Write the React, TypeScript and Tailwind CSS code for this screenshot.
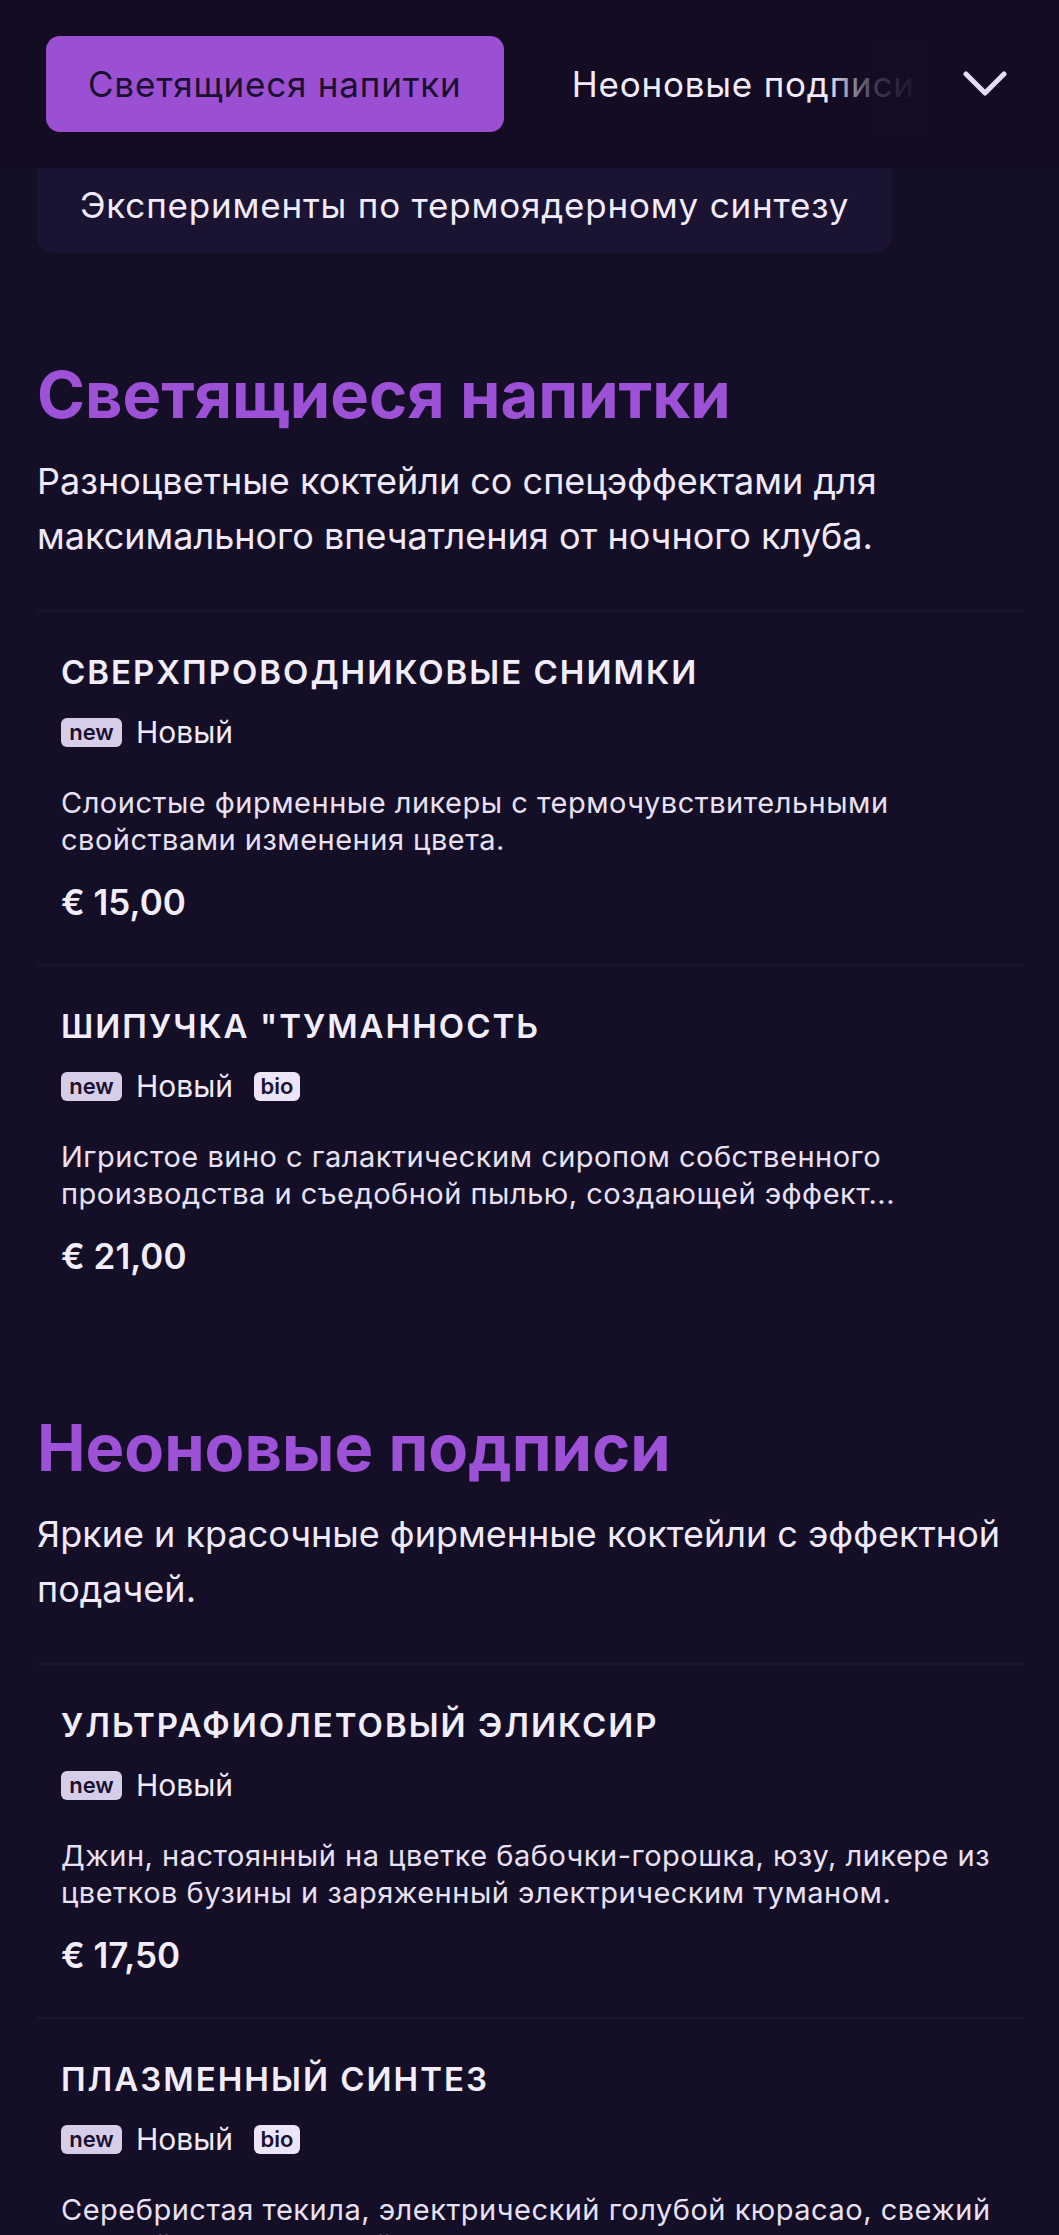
import React from 'react';

type Item = {
  title: string;
  desc: string;
  price: string;
  bio?: boolean;
};

type Section = {
  title: string;
  desc: string;
  items: Item[];
};

const sections: Section[] = [
  {
    title: 'Светящиеся напитки',
    desc: 'Разноцветные коктейли со спецэффектами для максимального впечатления от ночного клуба.',
    items: [
      {
        title: 'Сверхпроводниковые снимки',
        desc: 'Слоистые фирменные ликеры с термочувствительными свойствами изменения цвета.',
        price: '€ 15,00',
      },
      {
        title: 'Шипучка "Туманность',
        desc: 'Игристое вино с галактическим сиропом собственного производства и съедобной пылью, создающей эффект...',
        price: '€ 21,00',
        bio: true,
      },
    ],
  },
  {
    title: 'Неоновые подписи',
    desc: 'Яркие и красочные фирменные коктейли с эффектной подачей.',
    items: [
      {
        title: 'Ультрафиолетовый эликсир',
        desc: 'Джин, настоянный на цветке бабочки-горошка, юзу, ликере из цветков бузины и заряженный электрическим туманом.',
        price: '€ 17,50',
      },
      {
        title: 'Плазменный синтез',
        desc: 'Серебристая текила, электрический голубой кюрасао, свежий сок лайма и искрящийся тоник с ионным свечением.',
        price: '€ 19,00',
        bio: true,
      },
    ],
  },
];

function MenuItem({ item }: { item: Item }) {
  return (
    <div className="border-t-2 border-[#1d1633] px-[24px] pt-[40px] pb-[42px]">
      <h3 className="text-[33px] leading-[40px] font-semibold uppercase tracking-[2px] text-[#f2edfb]">
        {item.title}
      </h3>
      <div className="mt-[25px] flex h-[30px] items-center">
        <span className="flex h-[29px] w-[61px] items-center justify-center rounded-[6px] bg-[#d6cde8] text-[22px] font-semibold leading-none text-[#1a1130]">
          new
        </span>
        <span className="ml-[14px] text-[30px] leading-none text-[#efe9fa]">Новый</span>
        {item.bio && (
          <span className="ml-[21px] flex h-[29px] w-[46px] items-center justify-center rounded-[6px] bg-[#ebe5f7] text-[22px] font-semibold leading-none text-[#1a1130]">
            bio
          </span>
        )}
      </div>
      <p className="mt-[37px] line-clamp-2 text-[29px] leading-[37px] tracking-[0.5px] text-[#e8e1f4]">
        {item.desc}
      </p>
      <p className="mt-[24px] text-[35px] leading-[40px] font-semibold text-[#f2edfb]">{item.price}</p>
    </div>
  );
}

export default function App() {
  return (
    <div className="min-h-screen bg-[#150e27] font-['Inter',_'Noto_Sans',_sans-serif] text-white">
      {/* Category tabs */}
      <header className="sticky top-0 z-10 flex h-[168px] items-center bg-[#130c23] pl-[46px] pr-[52px]">
        <div className="relative flex-1 overflow-hidden">
          <div className="flex items-center gap-[26px] whitespace-nowrap">
            <button className="h-[96px] shrink-0 rounded-[14px] bg-[#9b50d3] px-[42px] text-[35px] tracking-[0.8px] text-[#1b0f30]">
              Светящиеся напитки
            </button>
            <button className="h-[96px] shrink-0 px-[42px] text-[35px] tracking-[0.8px] text-[#f1ebfc]">
              Неоновые подписи
            </button>
            <button className="h-[96px] shrink-0 px-[42px] text-[35px] tracking-[0.8px] text-[#f1ebfc]">
              Эксперименты
            </button>
          </div>
          <div className="pointer-events-none absolute inset-y-0 right-0 w-[100px] bg-gradient-to-l from-[#130c23] via-[#130c23]/80 to-transparent" />
        </div>
        <button className="ml-[38px] flex h-[44px] w-[44px] items-center justify-center">
          <svg width="44" height="26" viewBox="0 0 44 26" fill="none">
            <polyline
              points="3,3 22,22 41,3"
              stroke="#e6dcf6"
              strokeWidth="5"
              strokeLinecap="round"
              strokeLinejoin="round"
            />
          </svg>
        </button>
      </header>

      <main className="px-[37px]">
        {/* Last category card, scrolled under the tabs */}
        <div className="inline-flex h-[85px] items-center rounded-b-[16px] bg-[#1b1332] px-[43px] pb-[10px] text-[35px] tracking-[0.8px] text-[#f1ebfc]">
          Эксперименты по термоядерному синтезу
        </div>

        <div className="mt-[12px]">
          {sections.map((s) => (
            <section key={s.title} className="pt-[93px]">
              <h2 className="text-[65px] leading-[74px] font-bold text-[#9d51d6]">{s.title}</h2>
              <p className="mt-[22px] text-[36px] leading-[55px] text-[#efe9fa]">{s.desc}</p>
              <div className="mt-[46px]">
                {s.items.map((it) => (
                  <MenuItem key={it.title} item={it} />
                ))}
              </div>
            </section>
          ))}
        </div>
      </main>
    </div>
  );
}
